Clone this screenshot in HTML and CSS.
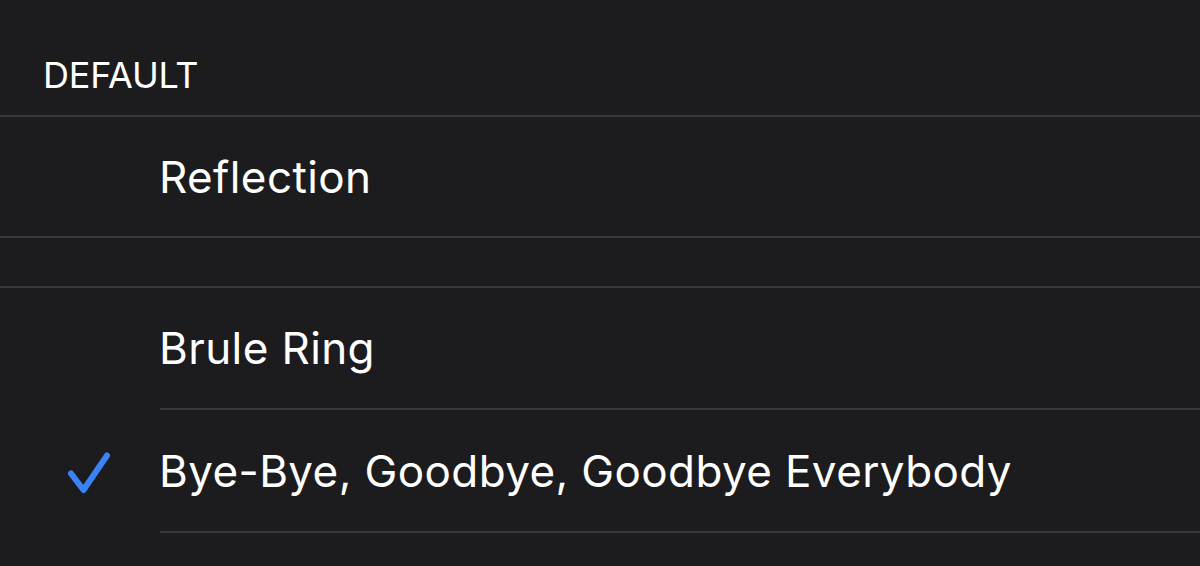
FILE: index.html
```html
<!DOCTYPE html>
<html>
<head>
<meta charset="utf-8">
<link rel="stylesheet" href="styles.css">
</head>
<body>
<div class="screen">
  <div class="section-header">DEFAULT</div>
  <div class="sep"></div>
  <div class="row row-first"><span class="check"></span><span class="label">Reflection</span></div>
  <div class="sep"></div>
  <div class="spacer"></div>
  <div class="sep"></div>
  <div class="row row-mid"><span class="check"></span><span class="label">Brule Ring</span></div>
  <div class="sep inset"></div>
  <div class="row row-last"><span class="check">
    <svg width="48" height="48" viewBox="0 0 48 48"><path d="M7 26.5 L19.5 43 L43 8.5" fill="none" stroke="#3b82f6" stroke-width="6" stroke-linecap="round" stroke-linejoin="round"/></svg>
  </span><span class="label">Bye-Bye, Goodbye, Goodbye Everybody</span></div>
  <div class="sep inset"></div>
</div>
</body>
</html>
```
FILE: styles.css
```css
html, body {
  margin: 0;
  padding: 0;
  background: #1c1c1e;
}
.screen {
  width: 1200px;
  height: 566px;
  overflow: hidden;
  display: flex;
  flex-direction: column;
  font-family: Inter, "Noto Sans", sans-serif;
  color: #ffffff;
}
.section-header {
  height: 115px;
  box-sizing: border-box;
  padding: 53px 0 0 43px;
  font-size: 36px;
  line-height: 44px;
  letter-spacing: -0.2px;
  flex: none;
}
.sep {
  height: 2px;
  background: #38383a;
  flex: none;
}
.sep.inset {
  margin-left: 160px;
}
.spacer {
  height: 48px;
  flex: none;
}
.row {
  flex: none;
  display: flex;
  align-items: center;
}
.row-first { height: 119px; }
.row-mid { height: 120px; }
.row-last { height: 121px; }
.check {
  width: 160px;
  flex: none;
  display: flex;
  justify-content: flex-start;
  padding-left: 64px;
  box-sizing: border-box;
}
.check svg {
  display: block;
}
.label {
  font-size: 44px;
  letter-spacing: 0.4px;
  margin-left: -1px;
}
```
